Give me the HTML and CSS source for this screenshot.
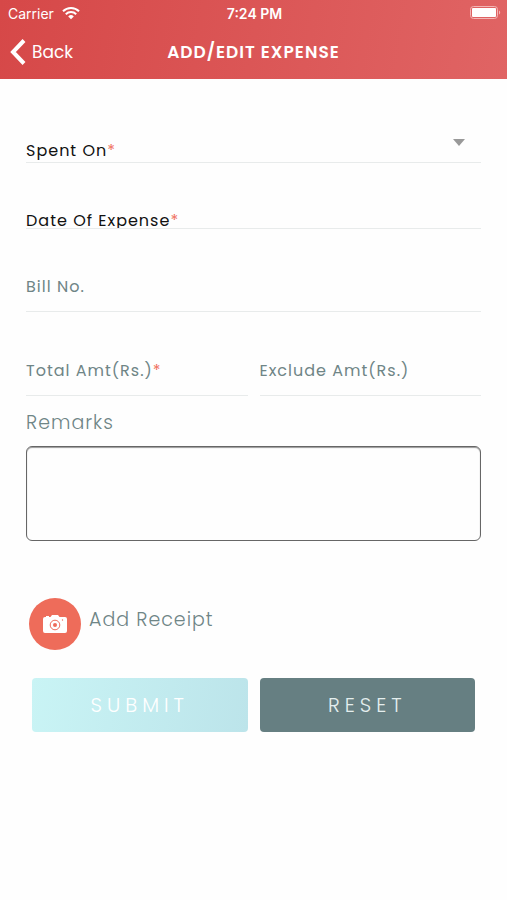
FILE: index.html
```
<!DOCTYPE html>
<html lang="en">

<head>
    <meta charset="UTF-8">
    <meta name="viewport" content="width=device-width, initial-scale=1.0">
    <title>Add/Edit Expense</title>
    <link rel="stylesheet" href="styles.css">
</head>

<body>
    <header class="header">
        <div class="status-bar">
            <div class="carrier">
                <span>Carrier</span>
                <svg width="18" height="14" viewBox="0 0 18 14" fill="none" stroke="#fff" stroke-width="2">
                    <path d="M1 5.2a11.3 11.3 0 0 1 16 0" />
                    <path d="M3.8 8.2a7.4 7.4 0 0 1 10.4 0" />
                    <path d="M9 13.2 6.2 10.4a4 4 0 0 1 5.6 0z" fill="#fff" stroke="none" />
                </svg>
            </div>
            <span class="time">7:24 PM</span>
            <svg class="battery" width="31" height="14" viewBox="0 0 31 14">
                <rect x="0.5" y="0.5" width="27" height="12" rx="3" fill="none" stroke="#f3b5b5" />
                <rect x="2" y="2" width="24" height="9" rx="1" fill="#fff" />
                <path d="M29 4.5c1.6.6 1.6 3.4 0 4z" fill="#f3b5b5" />
            </svg>
        </div>
        <nav class="nav-bar">
            <a class="back" href="#">
                <svg width="16" height="26" viewBox="0 0 16 26" fill="none" stroke="#fff" stroke-width="4">
                    <path d="M14 1.5 3 13l11 11.5" />
                </svg>
                <span>Back</span>
            </a>
            <h1>ADD/EDIT EXPENSE</h1>
        </nav>
    </header>

    <form class="expense-form" id="expenseForm">
        <div class="field spent-on">
            <label for="spentOn">Spent On<span class="required">*</span></label>
            <select id="spentOn" required>
                <option value=""></option>
                <option value="travel">Travel</option>
                <option value="food">Food</option>
                <option value="hotel">Hotel</option>
            </select>
            <svg class="arrow" width="12" height="7" viewBox="0 0 12 7">
                <path d="M0 0h12L6 7z" fill="#999" />
            </svg>
        </div>
        <div class="field expense-date">
            <label for="expenseDate">Date Of Expense<span class="required">*</span></label>
            <input type="text" id="expenseDate" required>
        </div>
        <div class="field text-field">
            <label for="billNo">Bill No.</label>
            <input type="text" id="billNo">
        </div>
        <div class="amounts">
            <div class="field text-field">
                <label for="totalAmt">Total Amt(Rs.)<span class="required">*</span></label>
                <input type="text" id="totalAmt" required>
            </div>
            <div class="field text-field">
                <label for="excludeAmt">Exclude Amt(Rs.)</label>
                <input type="text" id="excludeAmt">
            </div>
        </div>

        <label class="remarks-label" for="remarks">Remarks</label>
        <textarea id="remarks"></textarea>

        <div class="receipt">
            <button type="button" class="camera-btn" id="addReceipt" aria-labelledby="receiptLabel">
                <svg width="24" height="20" viewBox="0 0 24 20">
                    <path d="M2 3h1V2h3v1h1.500l1.500-2h6l1.500 2H22a2 2 0 0 1 2 2v12a2 2 0 0 1-2 2H2a2 2 0 0 1-2-2V5a2 2 0 0 1 2-2z" fill="#fff" />
                    <circle cx="12" cy="11" r="4.800" fill="none" stroke="#ee6c5a" />
                    <circle cx="12" cy="11" r="2" fill="#ee6c5a" />
                    <circle cx="19.500" cy="6" r="0.700" fill="#ee6c5a" />
                </svg>
            </button>
            <label id="receiptLabel" for="addReceipt">Add Receipt</label>
        </div>

        <div class="actions">
            <button type="submit" class="submit-btn">SUBMIT</button>
            <button type="reset" class="reset-btn">RESET</button>
        </div>
    </form>
</body>

</html>
```
FILE: styles.css
```
* {
    box-sizing: border-box;
}

body {
    margin: 0;
    font-family: Poppins, Inter, sans-serif;
    background-color: #fefefe;
    color: #6f8586;
}

.header {
    background: linear-gradient(100deg, #d64848, #e06464);
    color: white;
}

.status-bar {
    display: grid;
    grid-template-columns: 1fr auto 1fr;
    align-items: center;
    height: 28px;
    padding: 0 6px 2px 8px;
    font-family: Inter, sans-serif;
    font-size: 14px;
}

.carrier {
    display: flex;
    align-items: center;
    gap: 8px;
}

.time {
    font-weight: 600;
}

.battery {
    justify-self: end;
}

.nav-bar {
    display: grid;
    grid-template-columns: 1fr auto 1fr;
    align-items: center;
    height: 51px;
    padding: 0 10px 3px;
}

.back {
    display: flex;
    align-items: center;
    gap: 6px;
    color: white;
    font-size: 17px;
    text-decoration: none;
}

h1 {
    margin: 0;
    font-size: 17px;
    font-weight: 600;
    letter-spacing: 1px;
}

.expense-form {
    padding: 60px 26px 0;
}

.field {
    display: flex;
    min-width: 0;
    border-bottom: 1px solid #e8ebeb;
    font-size: 16px;
    line-height: 24px;
    letter-spacing: 1px;
}

.field input,
.field select {
    flex: 1;
    min-width: 0;
    height: 16px;
    padding: 0;
    border: none;
    outline: none;
    background: transparent;
    font: inherit;
    color: #111;
    appearance: none;
}

.required {
    color: #f0705f;
}

.spent-on,
.expense-date {
    color: #111;
}

.spent-on {
    height: 24px;
    padding-right: 16px;
}

.expense-date {
    height: 17px;
    margin-top: 49px;
    line-height: 18px;
    overflow: hidden;
}

.text-field {
    margin-top: 46px;
    padding-bottom: 12px;
}

.amounts {
    display: grid;
    grid-template-columns: 1fr 1fr;
    gap: 12px;
    margin-top: 47px;
}

.amounts .text-field {
    margin-top: 0;
}

.remarks-label {
    display: block;
    margin: 15px 0 11px;
    font-size: 19px;
    font-weight: 300;
    line-height: 24px;
    letter-spacing: 1px;
}

textarea {
    display: block;
    width: 100%;
    height: 95px;
    padding: 8px;
    border: 1px solid #666;
    border-radius: 6px;
    box-shadow: inset 0 1px 1px #999;
    background: transparent;
    font: inherit;
    resize: none;
}

.receipt {
    display: flex;
    gap: 8px;
    margin: 57px 3px 28px;
    font-size: 19px;
    font-weight: 300;
    line-height: 44px;
    letter-spacing: 1px;
}

.camera-btn {
    display: flex;
    align-items: center;
    justify-content: center;
    width: 52px;
    height: 52px;
    padding: 0;
    border: none;
    border-radius: 50%;
    background-color: #ee6c5a;
}

.actions {
    display: grid;
    grid-template-columns: 1fr 1fr;
    gap: 12px;
    padding: 0 6px;
}

.actions button {
    height: 54px;
    padding: 0;
    border: none;
    border-radius: 4px;
    font-family: inherit;
    font-size: 20px;
    font-weight: 300;
    letter-spacing: 5px;
    color: white;
}

.submit-btn {
    background: linear-gradient(100deg, #c9f4f5, #bce4ea);
}

.actions .reset-btn {
    background-color: #667f82;
    color: #e4eeee;
}
```
